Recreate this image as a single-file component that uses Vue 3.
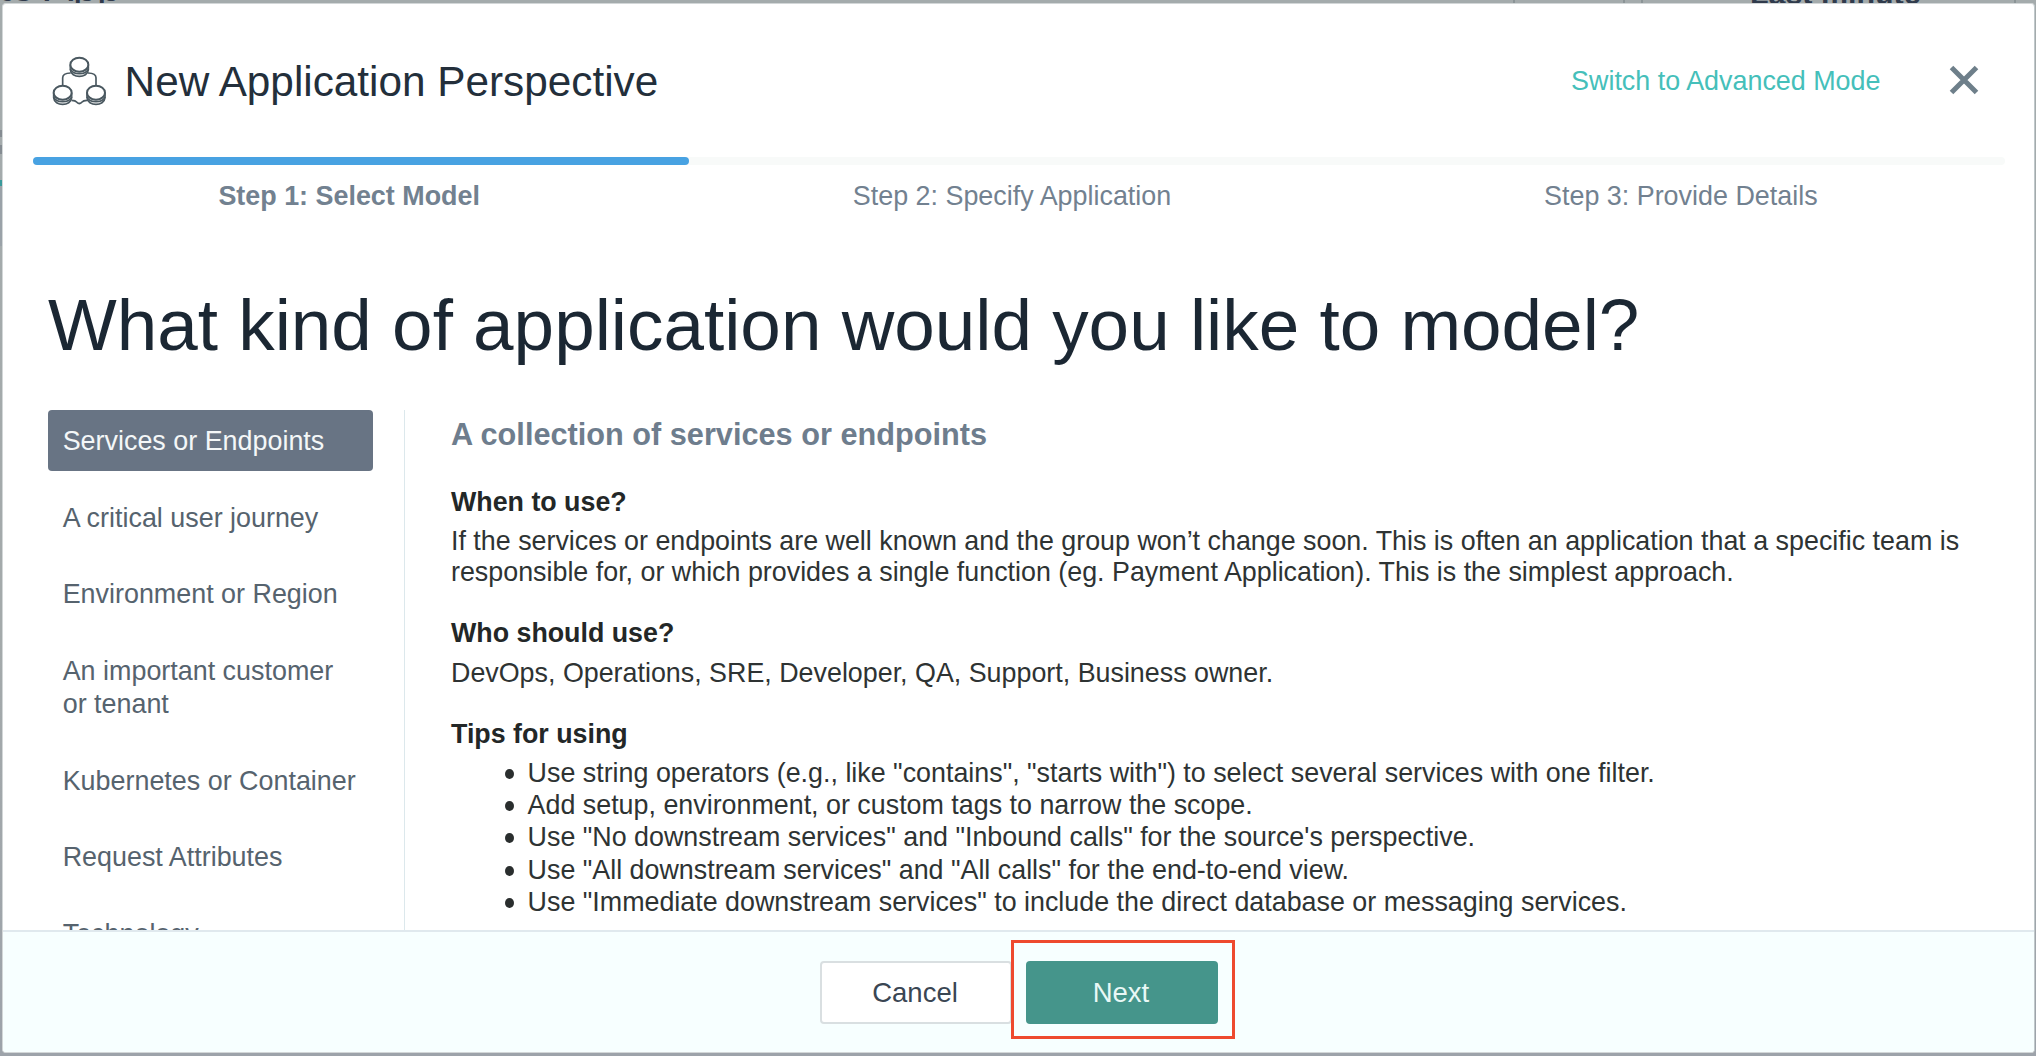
<script setup>
const steps = ['Step 1: Select Model', 'Step 2: Specify Application', 'Step 3: Provide Details']
const models = [
  'Services or Endpoints',
  'A critical user journey',
  'Environment or Region',
  'An important customer or tenant',
  'Kubernetes or Container',
  'Request Attributes',
  'Technology',
]
const tips = [
  'Use string operators (e.g., like "contains", "starts with") to select several services with one filter.',
  'Add setup, environment, or custom tags to narrow the scope.',
  'Use "No downstream services" and "Inbound calls" for the source\'s perspective.',
  'Use "All downstream services" and "All calls" for the end-to-end view.',
  'Use "Immediate downstream services" to include the direct database or messaging services.',
]
// centres of the three disks in the logo
const disks = [[118, 56], [68, 140], [168, 140]]
const current = 0
</script>

<template>
  <div class="page">
    <!-- dimmed page behind the dialog -->
    <div class="behind" aria-hidden="true">
      <span class="behind-title">te App</span>
      <span class="rule r1"></span>
      <span class="rule r2"></span>
      <span class="rule r3"></span>
      <span class="behind-range">Last minute</span>
      <span class="rule r4"></span>
      <span class="edge-mark m1"></span>
      <span class="edge-mark m2"></span>
      <span class="edge-tab"></span>
      <span class="edge-panel"></span>
    </div>

    <section class="dialog">
      <header class="header">
        <svg class="logo" viewBox="0 0 240 210" fill="none" stroke="#4a5860" stroke-width="5">
          <path d="M92 81Q68 82 68 95V119M144 81Q168 82 168 95V119M95 163Q106 163 111 169Q118 176 125 169Q130 163 141 163" />
          <g v-for="[x, y] in disks" :key="x" :transform="`translate(${x} ${y})`" fill="#fff">
            <path d="M-27 0V15C-25 42 25 42 27 15V0" />
            <path d="M-27 12C-20 32 20 32 27 12" />
            <ellipse rx="27" ry="21" stroke-width="6" />
          </g>
        </svg>
        <h2 class="title">New Application Perspective</h2>
        <a class="mode">Switch to Advanced Mode</a>
        <svg class="close" viewBox="0 0 30 30" stroke="#6e7f8a" stroke-width="5">
          <path d="M2.5 2.5 27.5 27.5M27.5 2.5 2.5 27.5" />
        </svg>
      </header>

      <div class="track"><div class="progress"></div></div>
      <div class="steps">
        <span v-for="(s, i) in steps" :key="s" :class="{ active: i === current }">{{ s }}</span>
      </div>

      <h1 class="question">What kind of application would you like to model?</h1>

      <div class="body">
        <nav class="models">
          <a v-for="(m, i) in models" :key="m" class="model" :class="{ selected: i === current }">{{ m }}</a>
        </nav>
        <article class="details">
          <h3>A collection of services or endpoints</h3>
          <h4 class="when">When to use?</h4>
          <p class="when-text">If the services or endpoints are well known and the group won’t change soon. This is often an application that a specific team is responsible for, or which provides a single function (eg. Payment Application). This is the simplest approach.</p>
          <h4 class="who">Who should use?</h4>
          <p class="who-text">DevOps, Operations, SRE, Developer, QA, Support, Business owner.</p>
          <h4 class="tips-title">Tips for using</h4>
          <ul class="tips">
            <li v-for="t in tips" :key="t">{{ t }}</li>
          </ul>
        </article>
      </div>

      <footer class="footer">
        <button class="btn">Cancel</button>
        <div class="next-wrap">
          <button class="btn primary">Next</button>
          <div class="highlight"></div>
        </div>
      </footer>
    </section>
  </div>
</template>

<style>
body { margin: 0; }
</style>

<style scoped>
.page {
  position: relative;
  width: 2036px;
  height: 1056px;
  overflow: hidden;
  box-sizing: border-box;
  padding: 3px 1px 3px 2px;
  background: linear-gradient(#a4abac, #a4aaab 60%, #9da3aa);
  font: 26.9px/32.7px "Liberation Sans", Arial, sans-serif;
}
.behind { position: absolute; inset: 0; color: #303b4c; white-space: nowrap; }
.behind > * { position: absolute; }
.behind-title { left: -1px; top: -34px; font-size: 43px; line-height: 40px; }
.behind-range { left: 1750px; top: -23px; font-size: 30.4px; font-weight: bold; line-height: 32px; }
.rule { top: 0; width: 2px; height: 4px; background: #8b9496; }
.r1 { left: 1513px; }
.r2 { left: 1623px; }
.r3 { left: 1641px; }
.r4 { left: 2014px; }
.edge-mark { left: 0; width: 2px; background: #858c92; }
.m1 { top: 130px; height: 7px; }
.m2 { top: 145px; height: 9px; }
.edge-tab { left: 0; top: 180px; width: 2px; height: 6px; background: #3a9a9b; }
.edge-panel { left: 0; top: 186px; width: 2px; height: 60px; background: #9aa2a8; }

.dialog {
  position: relative;
  display: flex;
  flex-direction: column;
  height: 100%;
  overflow: hidden;
  box-sizing: border-box;
  border: 1px solid #d3d7d8;
  border-right-color: #c0c8cb;
  border-radius: 4px;
  background: #fff;
}
.header { display: flex; align-items: center; flex: none; height: 153px; padding: 0 55px 0 37px; }
.logo { width: 80px; height: 70px; }
.title { margin: 2px auto 0 4.6px; font-size: 42.3px; font-weight: 400; line-height: 50px; color: #232f3b; }
.mode { margin: 0 68.5px 0 0; padding-top: 1px; color: #45bfba; }
.close { width: 30px; height: 30px; margin-bottom: 1px; }

.track { flex: none; height: 8px; margin: 0 29px 0 30px; border-radius: 4px; background: #f8faf9; }
.progress { width: 656px; height: 100%; border-radius: 4px; background: #48a2e2; }
.steps { display: flex; justify-content: space-around; flex: none; margin: 15px 30px 0 29px; line-height: 32px; color: #728190; }
.active { font-weight: bold; }

.question { flex: none; margin: 71px 0 0 45px; font-size: 72.85px; font-weight: 400; line-height: 84px; color: #1b2733; }

.body { display: flex; flex: 1; min-height: 0; margin-top: 43px; padding: 0 70px 0 45px; overflow: hidden; }
.models {
  display: flex;
  flex-direction: column;
  flex: none;
  gap: 16px;
  width: 324.5px;
  padding-right: 31px;
  border-right: 1px solid #dce8ec;
}
.model { flex: none; padding: 15px 14.7px 13px; border-radius: 4px; color: #56636e; }
.selected { background: #687484; color: #f4f7f8; }

.details { flex: 1; padding-left: 46.5px; padding-top: 0.6px; font-size: 26.85px; color: #2e3333; }
.details h3 { margin: 0; font-size: 30.7px; line-height: 47px; color: #6e7d8d; }
.details h4 { margin: 0; font-size: 26.8px; line-height: 32px; color: #232727; }
.details p { margin: 0; line-height: 31px; }
.details .when { margin-top: 28.6px; }
.details .when-text { margin-top: 7.4px; margin-right: -10px; }
.details .who { margin-top: 29.4px; }
.details .who-text { margin-top: 9px; }
.details .tips-title { margin-top: 29px; }
.tips { margin: 7px 0 0; padding: 0 0 0 76.6px; list-style: none; line-height: 32.2px; }
.tips li { position: relative; }
.tips li::before {
  content: "";
  position: absolute;
  left: -22.5px;
  top: 12px;
  width: 9px;
  height: 10px;
  border-radius: 50%;
  background: #2a2e2e;
}

.footer {
  display: flex;
  align-items: flex-start;
  flex: none;
  gap: 14px;
  height: 122px;
  padding: 29px 0 0 817px;
  box-sizing: border-box;
  border-top: 2px solid #e0e9ee;
  background: #f7ffff;
}
.btn {
  box-sizing: border-box;
  width: 192px;
  height: 63px;
  padding: 0 2px 0 0;
  border: 2px solid #d9dfe1;
  border-radius: 4px;
  background: #fff;
  color: #3a4653;
  font: 27.5px/32px "Liberation Sans", Arial, sans-serif;
}
.primary { border: 0; background: #45958b; color: #e9f8f6; }
.next-wrap { position: relative; }
.highlight { position: absolute; inset: -21px -17px -15px -15px; border: 3px solid #ee4a2f; }
</style>
